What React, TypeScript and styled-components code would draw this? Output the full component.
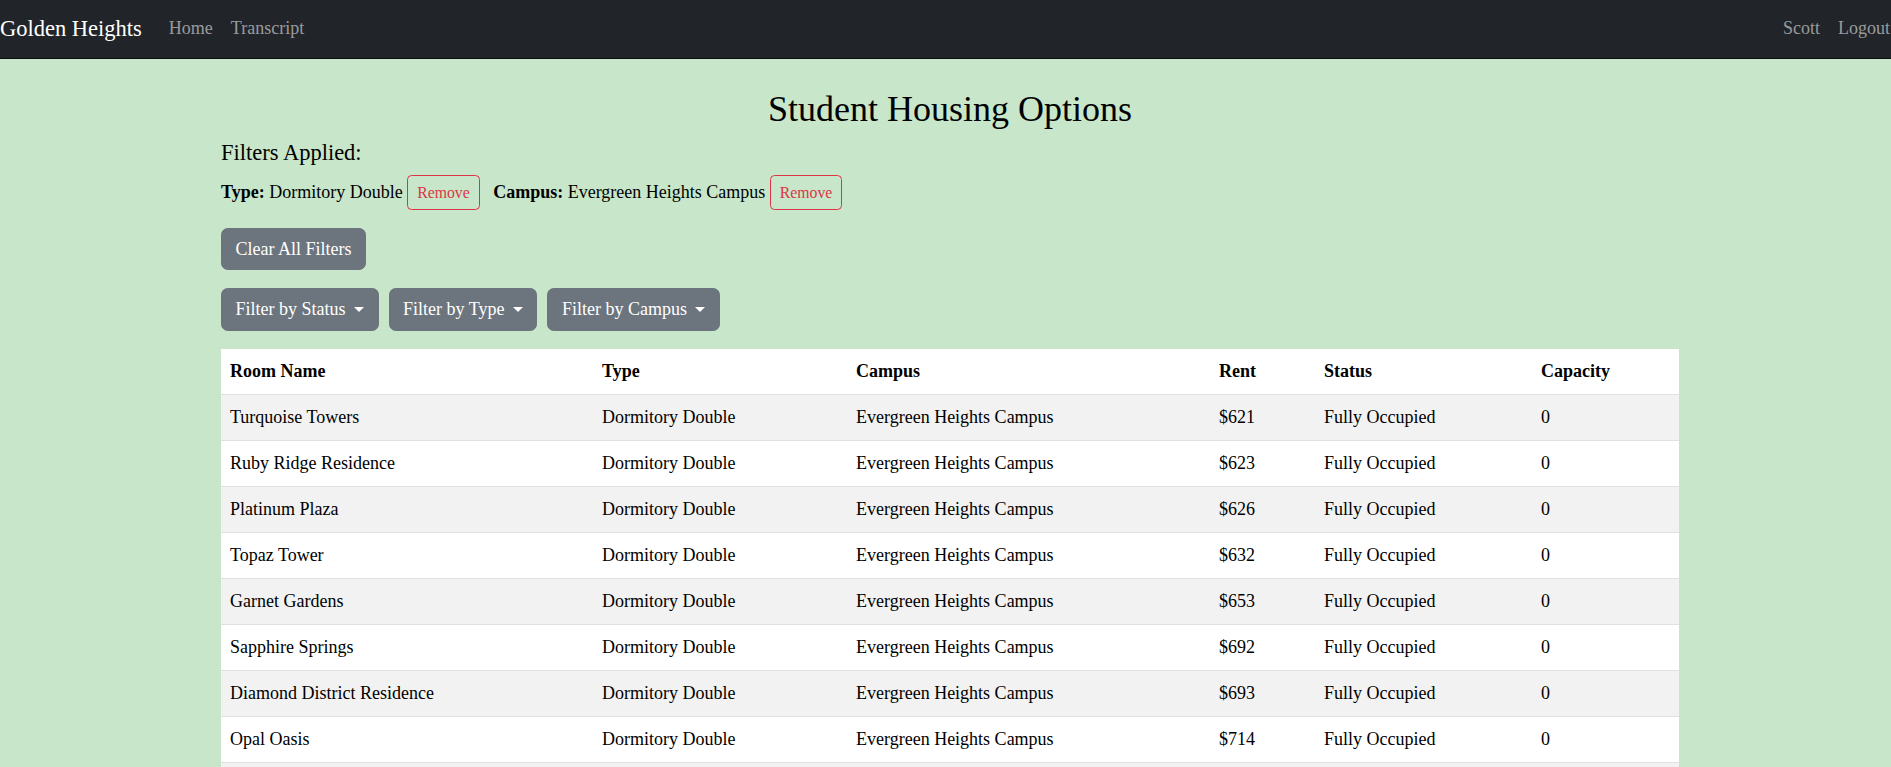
import React from "react";
import styled, { createGlobalStyle } from "styled-components";

const GlobalStyle = createGlobalStyle`
  html { font-size: 18px; }
  body {
    margin: 0;
    background: #c8e6c9;
    font-family: "Liberation Serif", "Times New Roman", serif;
    font-size: 18px;
    line-height: 1.5;
    color: #000;
  }
  * { box-sizing: border-box; }
`;

const NavBar = styled.nav`
  display: flex;
  align-items: center;
  justify-content: space-between;
  height: 59px;
  padding-bottom: 2px;
  background: #212529;
  border-bottom: 1px solid #0b0c0e;
`;

const NavGroup = styled.div<{ $edge?: boolean }>`
  display: flex;
  align-items: center;
  gap: 18px;
  padding-right: ${(p) => (p.$edge ? "1px" : "0")};
`;

const Brand = styled.a`
  color: #fff;
  font-size: 22.5px;
  line-height: 1.5;
  text-decoration: none;
  margin-right: 9px;
  position: relative;
  top: 0.5px;
`;

const NavLink = styled.a`
  color: rgba(255, 255, 255, 0.55);
  font-size: 18px;
  line-height: 27px;
  text-decoration: none;
`;

const Main = styled.main`
  padding: 0 212px 0 221px;
`;

const Title = styled.h2`
  margin: 29px 0 8px;
  font-size: 36px;
  font-weight: 400;
  line-height: 1.2;
  text-align: center;
`;

const SubTitle = styled.h5`
  margin: 0 0 9px;
  font-size: 22.5px;
  font-weight: 400;
  line-height: 1.2;
`;

const FilterLine = styled.div`
  margin-bottom: 18px;
`;

const FilterItem = styled.span`
  margin-right: 9px;
`;

const RemoveButton = styled.button`
  display: inline-block;
  font-family: inherit;
  font-size: 15.75px;
  line-height: 1.5;
  padding: 4.5px 9px;
  color: #dc3545;
  background: transparent;
  border: 1px solid #dc3545;
  border-radius: 4.5px;
  cursor: pointer;
`;

const Button = styled.button<{ $caret?: boolean }>`
  display: inline-flex;
  align-items: center;
  font-family: inherit;
  font-size: 18px;
  line-height: 1.5;
  padding: 6.75px 13.5px;
  color: #fff;
  background: #6c757d;
  border: 1px solid #6c757d;
  border-radius: 6.75px;
  cursor: pointer;
  &::after {
    content: ${(p) => (p.$caret ? '""' : "none")};
    display: inline-block;
    margin-left: 8.5px;
    border-top: 0.3em solid #fff;
    border-left: 0.3em solid transparent;
    border-right: 0.3em solid transparent;
    border-bottom: 0;
  }
`;

const ButtonRow = styled.div`
  display: flex;
  gap: 10px;
  margin-bottom: 18px;
`;

const Table = styled.table`
  width: 100%;
  table-layout: fixed;
  border-collapse: collapse;
  background: #fff;
  color: #000;
`;

const Col = styled.col<{ $w: number }>`
  width: ${(p) => p.$w}px;
`;

const HeadCell = styled.th`
  text-align: left;
  font-weight: 700;
  padding: 9px;
  border-bottom: 1px solid #dee2e6;
`;

const Row = styled.tr<{ $striped: boolean }>`
  background: ${(p) => (p.$striped ? "#f2f2f2" : "#fff")};
`;

const Cell = styled.td`
  padding: 9px;
  border-bottom: 1px solid #dee2e6;
`;

const cols = [372, 254, 363, 105, 217, 147];
const headers = ["Room Name", "Type", "Campus", "Rent", "Status", "Capacity"];

const rooms = [
  ["Turquoise Towers", 621],
  ["Ruby Ridge Residence", 623],
  ["Platinum Plaza", 626],
  ["Topaz Tower", 632],
  ["Garnet Gardens", 653],
  ["Sapphire Springs", 692],
  ["Diamond District Residence", 693],
  ["Opal Oasis", 714],
  ["Emerald Estates", 725],
] as const;

export default function App() {
  return (
    <>
      <GlobalStyle />
      <NavBar>
        <NavGroup>
          <Brand href="#">Golden Heights</Brand>
          <NavLink href="#">Home</NavLink>
          <NavLink href="#">Transcript</NavLink>
        </NavGroup>
        <NavGroup $edge>
          <NavLink href="#">Scott</NavLink>
          <NavLink href="#">Logout</NavLink>
        </NavGroup>
      </NavBar>
      <Main>
        <Title>Student Housing Options</Title>
        <SubTitle>Filters Applied:</SubTitle>
        <FilterLine>
          <FilterItem>
            <strong>Type:</strong> Dormitory Double{" "}
            <RemoveButton>Remove</RemoveButton>
          </FilterItem>{" "}
          <FilterItem>
            <strong>Campus:</strong> Evergreen Heights Campus{" "}
            <RemoveButton>Remove</RemoveButton>
          </FilterItem>
        </FilterLine>
        <ButtonRow>
          <Button>Clear All Filters</Button>
        </ButtonRow>
        <ButtonRow>
          <Button $caret>Filter by Status</Button>
          <Button $caret>Filter by Type</Button>
          <Button $caret>Filter by Campus</Button>
        </ButtonRow>
        <Table>
          <colgroup>
            {cols.map((w, i) => (
              <Col key={i} $w={w} />
            ))}
          </colgroup>
          <thead>
            <tr>
              {headers.map((h) => (
                <HeadCell key={h}>{h}</HeadCell>
              ))}
            </tr>
          </thead>
          <tbody>
            {rooms.map(([name, rent], i) => (
              <Row key={name} $striped={i % 2 === 0}>
                <Cell>{name}</Cell>
                <Cell>Dormitory Double</Cell>
                <Cell>Evergreen Heights Campus</Cell>
                <Cell>${rent}</Cell>
                <Cell>Fully Occupied</Cell>
                <Cell>0</Cell>
              </Row>
            ))}
          </tbody>
        </Table>
      </Main>
    </>
  );
}
